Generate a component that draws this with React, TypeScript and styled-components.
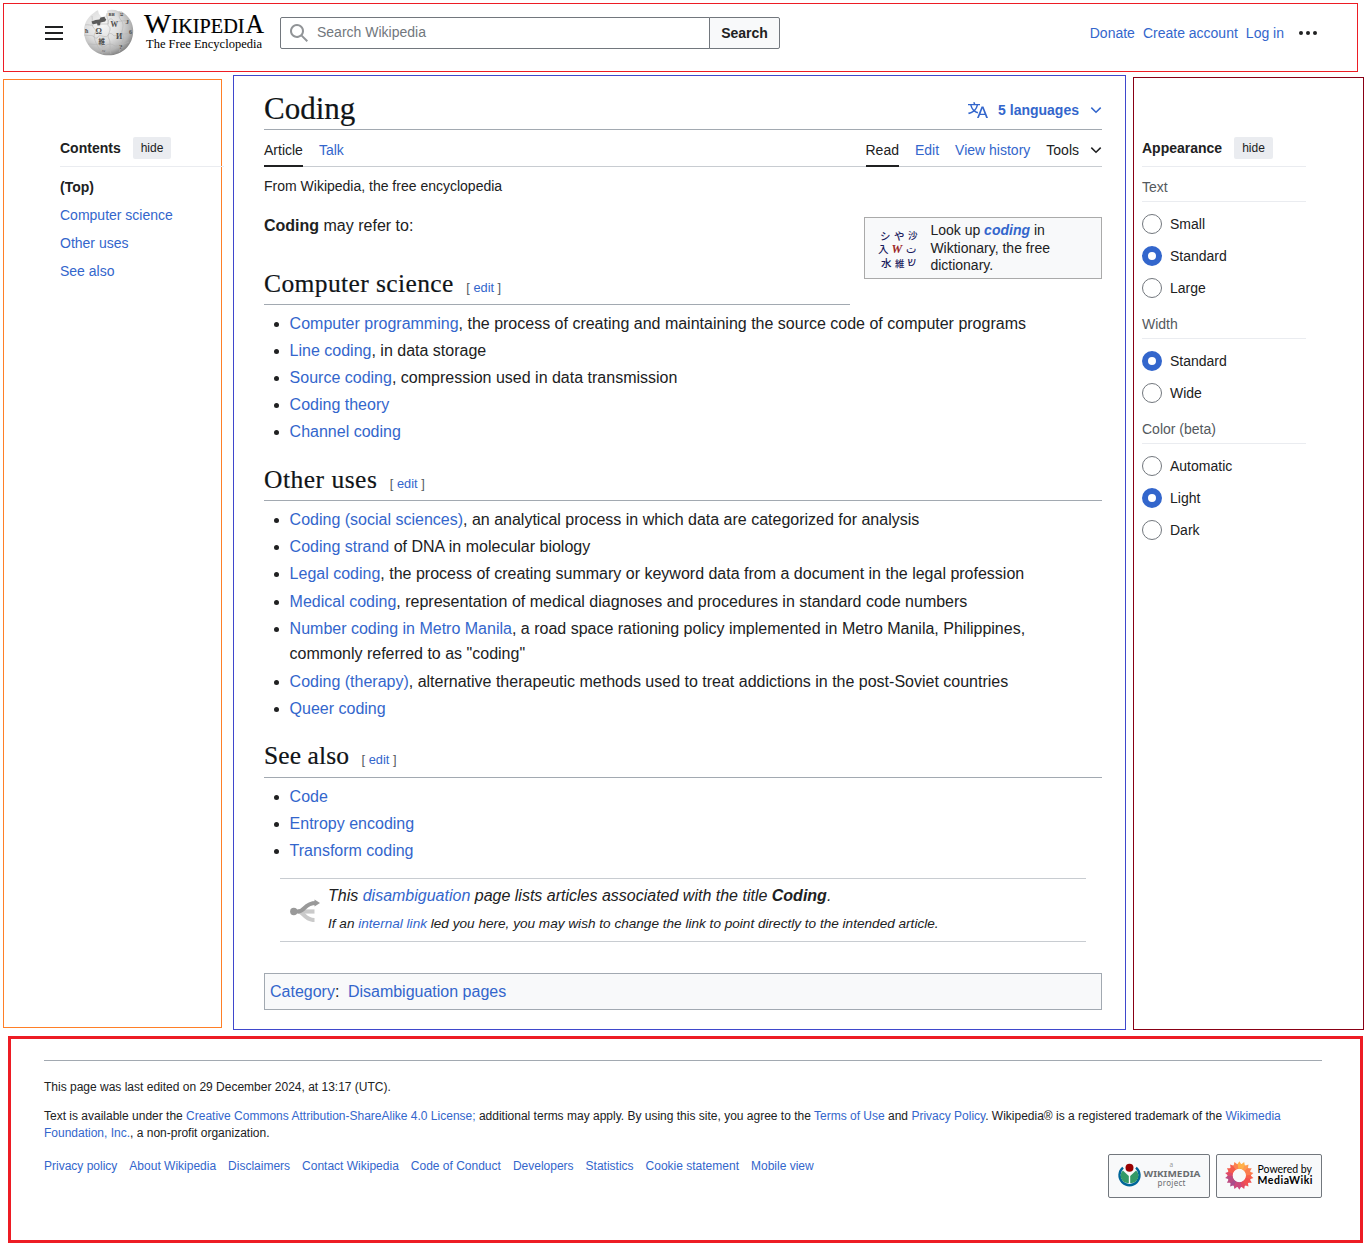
import React from "react";
import styled, { createGlobalStyle, css } from "styled-components";

const link = "#3366cc";
const ink = "#202122";
const rule = "#a2a9b1";

const GlobalStyle = createGlobalStyle`
  *, *::before, *::after { box-sizing: border-box; }
  body {
    margin: 0;
    background: #fff;
    color: ${ink};
    font-family: "Liberation Sans", Arial, sans-serif;
    font-size: 14px;
  }
`;

const Page = styled.div`
  width: 1366px;
  height: 1246px;
  padding-top: 3px;
  overflow: hidden;
`;

const A = styled.a`
  color: ${link};
  text-decoration: none;
`;

/* ---------- header ---------- */
const Header = styled.header`
  display: flex;
  align-items: flex-start;
  width: 1355px;
  height: 69px;
  margin-left: 3px;
  padding: 4px 39px 0 40px;
  border: 1px solid #ed1c24;
`;

const MenuIcon = styled.svg`
  width: 20px;
  height: 20px;
  margin-top: 15px;
  fill: ${ink};
`;

const Logo = styled.svg`
  width: 182px;
  height: 50px;
  margin-left: 19px;
  overflow: visible;
  font-family: "Liberation Serif", serif;
`;

const SearchForm = styled.form`
  display: flex;
  width: 500px;
  height: 32px;
  margin: 9px 0 0 15px;
`;

const SearchField = styled.div`
  display: flex;
  align-items: center;
  gap: 8px;
  width: 430px;
  padding: 0 0 2px 8px;
  border: 1px solid #72777d;
  border-radius: 2px 0 0 2px;
  color: #72777d;
  svg { width: 20px; height: 20px; fill: #919497; margin-top: 2px; }
`;

const SearchButton = styled.button`
  width: 71px;
  margin-left: -1px;
  padding: 0;
  border: 1px solid #72777d;
  border-radius: 0 2px 2px 0;
  background: #f8f9fa;
  color: ${ink};
  font: bold 14px "Liberation Sans", Arial, sans-serif;
`;

const UserLinks = styled.nav`
  display: flex;
  align-items: center;
  gap: 8px;
  height: 32px;
  margin: 9px 0 0 auto;
  svg { width: 20px; height: 20px; margin-left: 6px; fill: ${ink}; }
`;

/* ---------- columns ---------- */
const Columns = styled.div`
  display: flex;
  height: 964px;
  padding-left: 3px;
`;

const Sidebar = styled.aside<{ $side: "left" | "right" }>`
  ${(p) =>
    p.$side === "left"
      ? css`
          width: 219px;
          height: 949px;
          margin-top: 7px;
          padding: 56px 0 0 56px;
          border: 1px solid #ff7f27;
        `
      : css`
          width: 231px;
          height: 953px;
          margin: 5px 0 0 7px;
          padding: 58px 0 0 8px;
          border: 1px solid #880015;
        `}
`;

const PanelHead = styled.div`
  display: flex;
  align-items: center;
  gap: 12px;
  width: 164px;
  height: 31px;
  padding-bottom: 6px;
  border-bottom: 1px solid #eaecf0;
  font-weight: bold;
  white-space: nowrap;
`;

const HideButton = styled.button`
  height: 22px;
  padding: 0 8px;
  border: 0;
  border-radius: 2px;
  background: #eaecf0;
  color: ${ink};
  font: 12px "Liberation Sans", Arial, sans-serif;
`;

const Toc = styled.ul`
  margin: 6px 0 0;
  padding: 0;
  list-style: none;
  line-height: 28px;
`;

const OptionGroup = styled.section`
  width: 164px;
  height: 105px;
  &:nth-of-type(1) { height: 137px; }
`;

const OptionTitle = styled.h3`
  height: 35px;
  margin: 0 0 6px;
  padding-top: 4px;
  border-bottom: 1px solid #eaecf0;
  color: #54595d;
  font-size: 14px;
  font-weight: normal;
  line-height: 32px;
`;

const Option = styled.label`
  display: flex;
  align-items: center;
  gap: 8px;
  height: 32px;
`;

const Radio = styled.span<{ $on?: boolean }>`
  width: 20px;
  height: 20px;
  border: ${(p) => (p.$on ? `6px solid ${link}` : "1px solid #72777d")};
  border-radius: 50%;
`;

/* ---------- article ---------- */
const Article = styled.main`
  width: 893px;
  height: 955px;
  margin: 3px 0 0 11px;
  padding: 14px 23px 0 30px;
  border: 1px solid #3f48cc;
`;

const TitleBar = styled.div`
  display: flex;
  justify-content: space-between;
  height: 40px;
  border-bottom: 1px solid ${rule};
`;

const Title = styled.h1`
  margin: 0;
  font: normal 31px/38px "Liberation Serif", serif;
  color: #101418;
  -webkit-text-stroke: 0.2px #101418;
`;

const Languages = styled.div`
  display: flex;
  align-items: center;
  height: 40px;
  color: ${link};
  font-weight: bold;
  svg:first-child { width: 20px; height: 20px; margin-right: 10px; fill: ${link}; }
`;

const ChevronSvg = styled.svg`
  width: 12px;
  height: 12px;
  margin-left: 11px;
  fill: none;
  stroke: currentColor;
  stroke-width: 1.5;
`;

const Tabs = styled.nav`
  display: flex;
  gap: 16px;
  height: 37px;
  border-bottom: 1px solid #c8ccd1;
`;

const Tab = styled.a<{ $active?: boolean; $plain?: boolean }>`
  display: flex;
  align-items: center;
  height: 37px;
  padding-top: 5px;
  border-bottom: 2px solid ${(p) => (p.$active ? ink : "transparent")};
  color: ${(p) => (p.$active || p.$plain ? ink : link)};
`;

const Spacer = styled.div`
  flex: 1;
`;

const SiteSub = styled.div`
  padding-top: 9px;
  line-height: 20px;
`;

const Intro = styled.div`
  display: flex;
  justify-content: space-between;
  height: 109px;
`;

const IntroText = styled.div`
  display: flex;
  flex-direction: column;
  justify-content: space-between;
  width: 586px;
  padding-top: 16px;
  font-size: 16px;
  line-height: 27px;
`;

const SisterBox = styled.div`
  display: flex;
  width: 238px;
  height: 62px;
  margin-top: 21px;
  padding: 4px 0 0 11px;
  border: 1px solid #aaaaaa;
  background: #f8f9fa;
  line-height: 17.5px;
  p { margin: 0 0 0 12.400px; width: 150px; }
  svg { width: 42px; height: 42px; margin-top: 4px; overflow: visible; }
`;

const Term = styled(A)`
  font-weight: bold;
  font-style: italic;
`;

const Heading = styled.h2<{ $track: number; $height?: number }>`
  display: flex;
  align-items: baseline;
  height: ${(p) => p.$height ?? 40}px;
  margin: 0;
  border-bottom: 1px solid ${rule};
  font: normal 25.5px/37px "Liberation Serif", serif;
  letter-spacing: ${(p) => p.$track}px;
  color: #101418;
  -webkit-text-stroke: 0.2px #101418;
`;

const Edit = styled.span`
  margin-left: 12.500px;
  color: #54595d;
  font: 12.8px "Liberation Sans", Arial, sans-serif;
  letter-spacing: 0;
  -webkit-text-stroke: 0;
`;

const List = styled.ul<{ $before: number; $after: number }>`
  margin: ${(p) => p.$before}px 0 ${(p) => p.$after}px;
  padding: 0 0 0 25.6px;
  font-size: 16px;
  line-height: 25.6px;
  li { margin-bottom: 1.6px; }
`;

const Notice = styled.div`
  display: flex;
  align-items: center;
  height: 64px;
  margin: 14.2px 16px 31px;
  padding-left: 10px;
  border: solid #c8ccd1;
  border-width: 1px 0;
  font-style: italic;
  svg { width: 30px; height: 24px; margin-right: 8px; }
`;

const NoticeText = styled.div`
  padding-top: 1px;
  font-size: 16px;
  line-height: 26.6px;
  small { font-size: 13.6px; }
`;

const Category = styled.div`
  display: flex;
  height: 37px;
  padding-left: 5px;
  border: 1px solid ${rule};
  background: #f8f9fa;
  font-size: 16px;
  line-height: 35px;
  a + a { margin-left: 8.5px; }
  a:first-child::after { content: ":"; color: ${ink}; }
`;

/* ---------- footer ---------- */
const Footer = styled.footer`
  width: 1355px;
  height: 207px;
  margin-left: 8px;
  padding: 21px 38px 0 33px;
  border: 3px solid #ed1c24;
  font-size: 12px;
  line-height: 17px;
`;

const FooterInner = styled.div`
  padding-top: 18px;
  border-top: 1px solid ${rule};
  p { margin: 0 0 12px; white-space: nowrap; }
`;

const FooterRow = styled.div`
  display: flex;
  justify-content: space-between;
  margin-top: 12px;
`;

const FooterLinks = styled.nav`
  display: flex;
  gap: 12px;
  padding-top: 4px;
`;

const Badges = styled.div`
  display: flex;
  gap: 6px;
`;

const Badge = styled.svg`
  height: 44px;
  border: 1px solid #72777d;
  border-radius: 2px;
  background: #f8f9fa;
`;

const Chevron = () => (
  <ChevronSvg viewBox="0 0 12 12">
    <path d="M1.3 3.6 6 8.3l4.7-4.7" />
  </ChevronSvg>
);

const Globe = () => (
  <g>
    <defs>
      <radialGradient id="globe" cx="0.38" cy="0.34" r="0.7">
        <stop offset="0" stopColor="#f7f7f7" />
        <stop offset="0.5" stopColor="#dedede" />
        <stop offset="0.82" stopColor="#b3b3b3" />
        <stop offset="1" stopColor="#818181" />
      </radialGradient>
    </defs>
    <path
      fill="url(#globe)"
      d="M10 5.600c2-1.700 3-2.600 5-3.300l.8 3.300 2.600 3.400 3.600-.8 2.300-3.200-.3-2.300c1.600-.5 3-.9 4.600-1l3.500.3c1.500.3 2.200 1 3.500 1.400l3 .2C46 7.900 50.200 15 50.200 22.700 50.200 37 39.500 47.300 25.600 47.300 12 47.300 1 37 1 22.700 1 16 4.400 9.600 10 5.600z"
    />
    <g fill="none" stroke="#b4b4b4" strokeWidth="0.6">
      <path d="M2 17c4-1 6 1 8 0s0-4 3-4 2 3 5 3h7c1-2-1-4 2-5s3 3 5 3 8-2 14-1" />
      <path d="M1 27c5 1 7 0 9 1s2 3 4 2 0-3 5-2 5 1 6-1 4-2 5 0 6-1 9-1 7 0 10-2" />
      <path d="M5 36c4 0 8 1 11 0s1 3 4 3 3-3 7-3 4 3 7 2 8-2 12-4" />
      <path d="M9 8c1 5-1 8 1 11s4 3 2 6 0 8 2 12 4 6 6 9" />
      <path d="M24 5c-1 5 2 6 1 10s3 3 2 7-3 6-1 9 0 9 2 15" />
      <path d="M36 3c1 4-1 6 2 9s2 8 1 11 3 5 1 9-1 7-4 12" />
    </g>
    <path fill="#5a5a5a" d="m8.500 13.500 4-1.500 4-.6 1-2 4-.6.800 1.600 1 1-1.200 2.200-4.600.8-.4 2.800-2.500.4-.6-2.200-2.500.600H9.500z" />
    <g fill="#4d4d4d" fontWeight="bold">
      <text x="12.400" y="25.500" fontSize="8">Ω</text>
      <text x="27.500" y="19" fontSize="7.500">W</text>
      <text x="33" y="30.500" fontSize="8">И</text>
      <text x="15.500" y="36" fontSize="6.500" fontFamily="Noto Sans CJK JP">維</text>
      <text x="36" y="41" fontSize="7">?</text>
      <text x="42.500" y="16" fontSize="7">J</text>
      <text x="25.500" y="7.500" fontSize="5.500">ви</text>
      <text x="2" y="25" fontSize="6">ħ</text>
      <text x="19" y="45" fontSize="6">~</text>
      <text x="37" y="8" fontSize="6">ע</text>
      <text x="46" y="26" fontSize="6">6</text>
    </g>
  </g>
);

const petals = ["#ffb04a", "#ff9950", "#fb7d4f", "#f65f4c", "#f25050", "#e44762", "#cc487c", "#a94c8c", "#bd4a80", "#e14a67", "#f45b4c", "#fc8250"];

export default function App() {
  return (
    <Page>
      <GlobalStyle />
      <Header>
        <MenuIcon viewBox="0 0 20 20">
          <path d="M1 3v2h18V3zm0 8h18V9H1zm0 6h18v-2H1z" />
        </MenuIcon>
        <Logo viewBox="0 0 182 50">
          <Globe />
          <g fill="#000">
            <g stroke="#000" strokeWidth="0.2">
              <text x="61" y="25" fontSize="27" textLength="27" lengthAdjust="spacingAndGlyphs">W</text>
              <text x="88.500" y="25" fontSize="20" textLength="73" lengthAdjust="spacingAndGlyphs">IKIPEDI</text>
              <text x="162.500" y="25" fontSize="27" textLength="18.500" lengthAdjust="spacingAndGlyphs">A</text>
            </g>
            <text x="63" y="39.500" fontSize="13.500" textLength="116" lengthAdjust="spacingAndGlyphs">The Free Encyclopedia</text>
          </g>
        </Logo>
        <SearchForm>
          <SearchField>
            <svg viewBox="0 0 20 20">
              <path d="M12.200 13.600a7 7 0 1 1 1.400-1.400l5.400 5.400-1.400 1.400zM3 8a5 5 0 1 0 10 0A5 5 0 0 0 3 8" />
            </svg>
            <span>Search Wikipedia</span>
          </SearchField>
          <SearchButton type="button">Search</SearchButton>
        </SearchForm>
        <UserLinks>
          <A>Donate</A>
          <A>Create account</A>
          <A>Log in</A>
          <svg viewBox="0 0 20 20">
            <circle cx="3" cy="10" r="2" />
            <circle cx="10" cy="10" r="2" />
            <circle cx="17" cy="10" r="2" />
          </svg>
        </UserLinks>
      </Header>

      <Columns>
        <Sidebar $side="left">
          <PanelHead>
            Contents<HideButton>hide</HideButton>
          </PanelHead>
          <Toc>
            <li><b>(Top)</b></li>
            <li><A>Computer science</A></li>
            <li><A>Other uses</A></li>
            <li><A>See also</A></li>
          </Toc>
        </Sidebar>

        <Article>
          <TitleBar>
            <Title>Coding</Title>
            <Languages>
              <svg viewBox="0 0 20 20">
                <path d="M20 18h-1.440a.6.6 0 0 1-.4-.12.8.8 0 0 1-.23-.31L17 15h-5l-1 2.540a.8.8 0 0 1-.22.3.6.6 0 0 1-.4.14H9l4.550-11.470h1.890zm-3.530-4.310L14.890 9.500a12 12 0 0 1-.39-1.240q-.09.37-.19.69l-.19.56-1.580 4.190zm-6.300-1.580a13.400 13.400 0 0 1-2.910-1.410 11.460 11.460 0 0 0 2.810-5.370H12V4H7.310a4 4 0 0 0-.2-.56C6.870 2.790 6.600 2 6.600 2l-1.470.5s.4.89.6 1.500H0v1.330h2.150A11.230 11.230 0 0 0 5 10.700a17.200 17.200 0 0 1-5 2.100q.56.82.87 1.380a23.300 23.300 0 0 0 5.220-2.510 15.600 15.600 0 0 0 3.560 1.770zM3.630 5.330h4.910a8.100 8.100 0 0 1-2.450 4.450 9.100 9.100 0 0 1-2.460-4.450" />
              </svg>
              5 languages
              <Chevron />
            </Languages>
          </TitleBar>
          <Tabs>
            <Tab $active>Article</Tab>
            <Tab>Talk</Tab>
            <Spacer />
            <Tab $active>Read</Tab>
            <Tab>Edit</Tab>
            <Tab>View history</Tab>
            <Tab $plain>Tools<Chevron /></Tab>
          </Tabs>
          <SiteSub>From Wikipedia, the free encyclopedia</SiteSub>
          <Intro>
            <IntroText>
              <div><b>Coding</b> may refer to:</div>
              <Heading $track={0.4}>Computer science<Edit>[ <A>edit</A> ]</Edit></Heading>
            </IntroText>
            <SisterBox>
              <svg viewBox="0 0 42 42" fill="#1b1b5e" fontFamily="Noto Sans CJK JP" fontSize="10.500" fontWeight="500">
                <text x="4" y="14">シ</text>
                <text x="18" y="14">や</text>
                <text x="32" y="13" fontSize="9.500">沙</text>
                <text x="2" y="27">入</text>
                <text x="15.500" y="27" fill="#9b2525" fontSize="12" fontStyle="italic" fontWeight="bold" fontFamily="Liberation Serif">W</text>
                <text x="30" y="27" fontFamily="DejaVu Sans" fontSize="11">ت</text>
                <text x="5" y="41">水</text>
                <text x="19" y="41" fontSize="9.500">維</text>
                <text x="31.500" y="40" fontFamily="DejaVu Sans" fontSize="12">ש</text>
              </svg>
              <p>
                Look up <Term>coding</Term> in Wiktionary, the free dictionary.
              </p>
            </SisterBox>
          </Intro>
          <List $before={5.5} $after={16.1}>
            <li><A>Computer programming</A>, the process of creating and maintaining the source code of computer programs</li>
            <li><A>Line coding</A>, in data storage</li>
            <li><A>Source coding</A>, compression used in data transmission</li>
            <li><A>Coding theory</A></li>
            <li><A>Channel coding</A></li>
          </List>
          <Heading $track={0.5}>Other uses<Edit>[ <A>edit</A> ]</Edit></Heading>
          <List $before={6.1} $after={15.5}>
            <li><A>Coding (social sciences)</A>, an analytical process in which data are categorized for analysis</li>
            <li><A>Coding strand</A> of DNA in molecular biology</li>
            <li><A>Legal coding</A>, the process of creating summary or keyword data from a document in the legal profession</li>
            <li><A>Medical coding</A>, representation of medical diagnoses and procedures in standard code numbers</li>
            <li>
              <A>Number coding in Metro Manila</A>, a road space rationing policy implemented in Metro Manila, Philippines,
              <br />
              commonly referred to as "coding"
            </li>
            <li><A>Coding (therapy)</A>, alternative therapeutic methods used to treat addictions in the post-Soviet countries</li>
            <li><A>Queer coding</A></li>
          </List>
          <Heading $track={0.1} $height={41}>See also<Edit>[ <A>edit</A> ]</Edit></Heading>
          <List $before={5.8} $after={0}>
            <li><A>Code</A></li>
            <li><A>Entropy encoding</A></li>
            <li><A>Transform coding</A></li>
          </List>
          <Notice>
            <svg viewBox="0 0 30 24" fill="none">
              <g stroke="#cacaca" strokeWidth="4.200">
                <path d="M8 13.500h16.500" />
                <path d="M8 13.500c6 0 6 8.500 16.500 8.500" />
              </g>
              <path d="M3 13.500h5C15 13.500 14 5 26 5" stroke="#999" strokeWidth="4.200" />
              <circle cx="3.800" cy="13.500" r="3.700" fill="#999" />
              <path d="m24.500 1.500 5.500 3.500-5.500 3.500z" fill="#999" />
            </svg>
            <NoticeText>
              <div>This <A>disambiguation</A> page lists articles associated with the title <b>Coding</b>.</div>
              <div><small>If an <A>internal link</A> led you here, you may wish to change the link to point directly to the intended article.</small></div>
            </NoticeText>
          </Notice>
          <Category>
            <A>Category</A>
            <A>Disambiguation pages</A>
          </Category>
        </Article>

        <Sidebar $side="right">
          <PanelHead>
            Appearance<HideButton>hide</HideButton>
          </PanelHead>
          <OptionGroup>
            <OptionTitle>Text</OptionTitle>
            <Option><Radio />Small</Option>
            <Option><Radio $on />Standard</Option>
            <Option><Radio />Large</Option>
          </OptionGroup>
          <OptionGroup>
            <OptionTitle>Width</OptionTitle>
            <Option><Radio $on />Standard</Option>
            <Option><Radio />Wide</Option>
          </OptionGroup>
          <OptionGroup>
            <OptionTitle>Color (beta)</OptionTitle>
            <Option><Radio />Automatic</Option>
            <Option><Radio $on />Light</Option>
            <Option><Radio />Dark</Option>
          </OptionGroup>
        </Sidebar>
      </Columns>

      <Footer>
        <FooterInner>
          <p>This page was last edited on 29 December 2024, at 13:17 (UTC).</p>
          <p>
            Text is available under the <A>Creative Commons Attribution-ShareAlike 4.0 License;</A> additional terms may apply. By using this site, you agree to the <A>Terms of Use</A> and <A>Privacy Policy</A>. Wikipedia® is a registered trademark of the <A>Wikimedia
            <br />
            Foundation, Inc.</A>, a non-profit organization.
          </p>
          <FooterRow>
            <FooterLinks>
              {["Privacy policy", "About Wikipedia", "Disclaimers", "Contact Wikipedia", "Code of Conduct", "Developers", "Statistics", "Cookie statement", "Mobile view"].map((t) => (
                <A key={t}>{t}</A>
              ))}
            </FooterLinks>
            <Badges>
              <Badge width="102" viewBox="0 0 100 42">
                <path d="M14 12.600a10 10 0 1 0 13 0" fill="none" stroke="#069" strokeWidth="2.400" />
                <path d="M13.900 15.400a7.300 7.300 0 0 0 5.900 12.500V21z" fill="#396" />
                <path d="M27.100 15.400a7.300 7.300 0 0 1-5.900 12.500V21z" fill="#396" />
                <circle cx="20.500" cy="12.800" r="4" fill="#900" />
                <g fill="#6a6d70" fontFamily="Noto Sans">
                  <text x="60.500" y="12" fontSize="6.500" fill="#999">a</text>
                  <text x="34.500" y="21.800" fontSize="8.200" fontWeight="bold" textLength="57" lengthAdjust="spacingAndGlyphs">WIKIMEDIA</text>
                  <text x="48.500" y="30.500" fontSize="8" textLength="28">project</text>
                </g>
              </Badge>
              <Badge width="106" viewBox="0 0 104 42">
                <defs>
                  <linearGradient id="flower" x1="0.7" y1="0" x2="0.3" y2="1">
                    <stop offset="0" stopColor="#ffb34d" />
                    <stop offset="0.5" stopColor="#f4544c" />
                    <stop offset="1" stopColor="#9a4f95" />
                  </linearGradient>
                </defs>
                <circle cx="22.300" cy="20.500" r="9.200" fill="none" stroke="url(#flower)" strokeWidth="5" />
                {Array.from({ length: 18 }, (_, i) => (
                  <path
                    key={i}
                    d="M22.300 6.200 24.600 10 23.600 13.600h-2.600L20 10z"
                    fill={petals[Math.floor((i * 12) / 18)]}
                    transform={`rotate(${i * 20} 22.300 20.500)`}
                  />
                ))}
                <g fill="#000" fontFamily="Lato">
                  <text x="40.500" y="17.500" fontSize="10.500" textLength="54.500">Powered by</text>
                  <text x="40.500" y="29" fontSize="10.500" fontWeight="bold" textLength="55">MediaWiki</text>
                </g>
              </Badge>
            </Badges>
          </FooterRow>
        </FooterInner>
      </Footer>
    </Page>
  );
}
